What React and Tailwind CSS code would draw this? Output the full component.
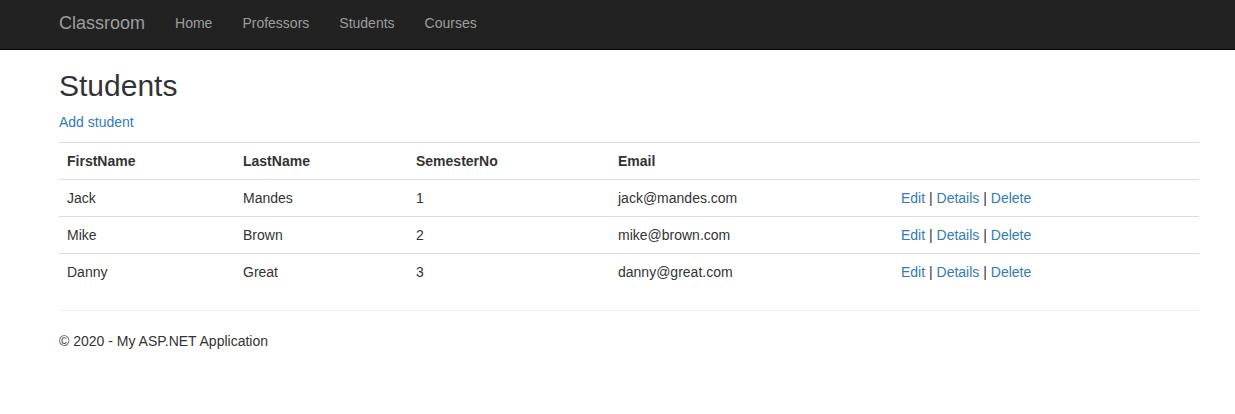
const students = [
  { first: 'Jack', last: 'Mandes', sem: 1, email: 'jack@mandes.com' },
  { first: 'Mike', last: 'Brown', sem: 2, email: 'mike@brown.com' },
  { first: 'Danny', last: 'Great', sem: 3, email: 'danny@great.com' },
];

export default function App() {
  return (
    <div className="min-h-[414px] bg-white text-[14px] leading-[20px] text-[#333] font-['Liberation_Sans',Arial,sans-serif]">
      {/* Navbar */}
      <nav className="h-[50px] bg-[#222] border-b border-[#080808]">
        <div className="flex pt-[13px] pl-[59px] items-start">
          <a href="#" className="text-[18px] leading-[20px] text-[#9d9d9d] pr-[15px]">Classroom</a>
          <a href="#" className="px-[15px] text-[#9d9d9d]">Home</a>
          <a href="#" className="px-[15px] text-[#9d9d9d]">Professors</a>
          <a href="#" className="px-[15px] text-[#9d9d9d]">Students</a>
          <a href="#" className="px-[15px] text-[#9d9d9d]">Courses</a>
        </div>
      </nav>

      {/* Body */}
      <div className="w-[1140px] ml-[59px]">
        <h2 className="mt-[19px] mb-[10px] text-[30px] leading-[33px] font-normal">Students</h2>
        <p className="mb-[10px]">
          <a href="#" className="text-[#337ab7]">Add student</a>
        </p>
        <table className="w-full border-collapse mb-[20px]">
          <tbody>
            <tr>
              <th className="w-[176px] text-left font-bold p-[8px] border-t border-[#ddd]">FirstName</th>
              <th className="w-[173px] text-left font-bold p-[8px] border-t border-[#ddd]">LastName</th>
              <th className="w-[202px] text-left font-bold p-[8px] border-t border-[#ddd]">SemesterNo</th>
              <th className="w-[283px] text-left font-bold p-[8px] border-t border-[#ddd]">Email</th>
              <th className="p-[8px] border-t border-[#ddd]"></th>
            </tr>
            {students.map((s) => (
              <tr key={s.email}>
                <td className="p-[8px] border-t border-[#ddd]">{s.first}</td>
                <td className="p-[8px] border-t border-[#ddd]">{s.last}</td>
                <td className="p-[8px] border-t border-[#ddd]">{s.sem}</td>
                <td className="p-[8px] border-t border-[#ddd]">{s.email}</td>
                <td className="p-[8px] border-t border-[#ddd]">
                  <a href="#" className="text-[#337ab7]">Edit</a> |{' '}
                  <a href="#" className="text-[#337ab7]">Details</a> |{' '}
                  <a href="#" className="text-[#337ab7]">Delete</a>
                </td>
              </tr>
            ))}
          </tbody>
        </table>
        <hr className="border-t border-[#eee] mb-[20px]" />
        <footer>
          <p>© 2020 - My ASP.NET Application</p>
        </footer>
      </div>
    </div>
  );
}
